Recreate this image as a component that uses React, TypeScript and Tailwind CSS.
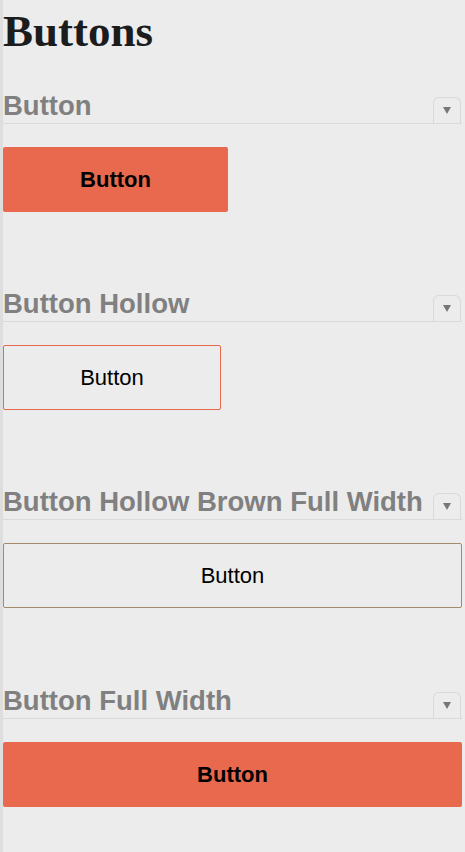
import type { ReactNode } from 'react';

type Variant = 'solid' | 'hollow' | 'hollowBrown';

interface Section {
  title: string;
  variant: Variant;
  fullWidth: boolean;
}

const sections: Section[] = [
  { title: 'Button', variant: 'solid', fullWidth: false },
  { title: 'Button Hollow', variant: 'hollow', fullWidth: false },
  { title: 'Button Hollow Brown Full Width', variant: 'hollowBrown', fullWidth: true },
  { title: 'Button Full Width', variant: 'solid', fullWidth: true },
];

/**
 * Section header with the little collapse tab on the right
 */
function SectionHeader({ children }: { children: ReactNode }) {
  return (
    <div className="relative flex items-end border-b border-[#dadada] pb-[4px]">
      <h2 className="text-[27.5px] leading-[27px] font-bold text-[#808080]">{children}</h2>
      <button
        type="button"
        className="absolute right-[1px] bottom-0 flex h-[26px] w-[28px] items-center justify-center rounded-t-[6px] border border-b-0 border-[#d9d9d9]"
      >
        <span className="block h-0 w-0 border-x-[4px] border-t-[7px] border-x-transparent border-t-[#777777]" />
      </button>
    </div>
  );
}

function DemoButton({ variant, fullWidth }: { variant: Variant; fullWidth: boolean }) {
  const base = 'flex h-[65px] items-center justify-center rounded-[2px] text-[22px] text-black';
  const width = fullWidth ? 'w-full' : variant === 'solid' ? 'w-[225px]' : 'w-[218px]';
  const look =
    variant === 'solid'
      ? 'bg-[#e8694d] font-bold'
      : variant === 'hollow'
        ? 'border border-[#e8694d]'
        : 'border border-[#a38b6d]';
  return (
    <button type="button" className={`${base} ${width} ${look}`}>
      Button
    </button>
  );
}

export default function App() {
  return (
    <div className="min-h-[852px] w-[465px] border-l-[3px] border-[#dedede] bg-[#ececec] pr-[3px] font-['Liberation_Sans',Arial,sans-serif]">
      <h1 className="pt-[6px] font-['Liberation_Serif','Times_New_Roman',serif] text-[45px] leading-[50px] font-bold text-[#1c1c1c]">
        Buttons
      </h1>

      <div className="mt-[36px] flex flex-col gap-[78px]">
        {sections.map((s, i) => (
          <section
            key={s.title}
            className={i === sections.length - 1 ? 'mt-[1px] flex flex-col gap-[23px]' : 'flex flex-col gap-[23px]'}
          >
            <SectionHeader>{s.title}</SectionHeader>
            <DemoButton variant={s.variant} fullWidth={s.fullWidth} />
          </section>
        ))}
      </div>
    </div>
  );
}
